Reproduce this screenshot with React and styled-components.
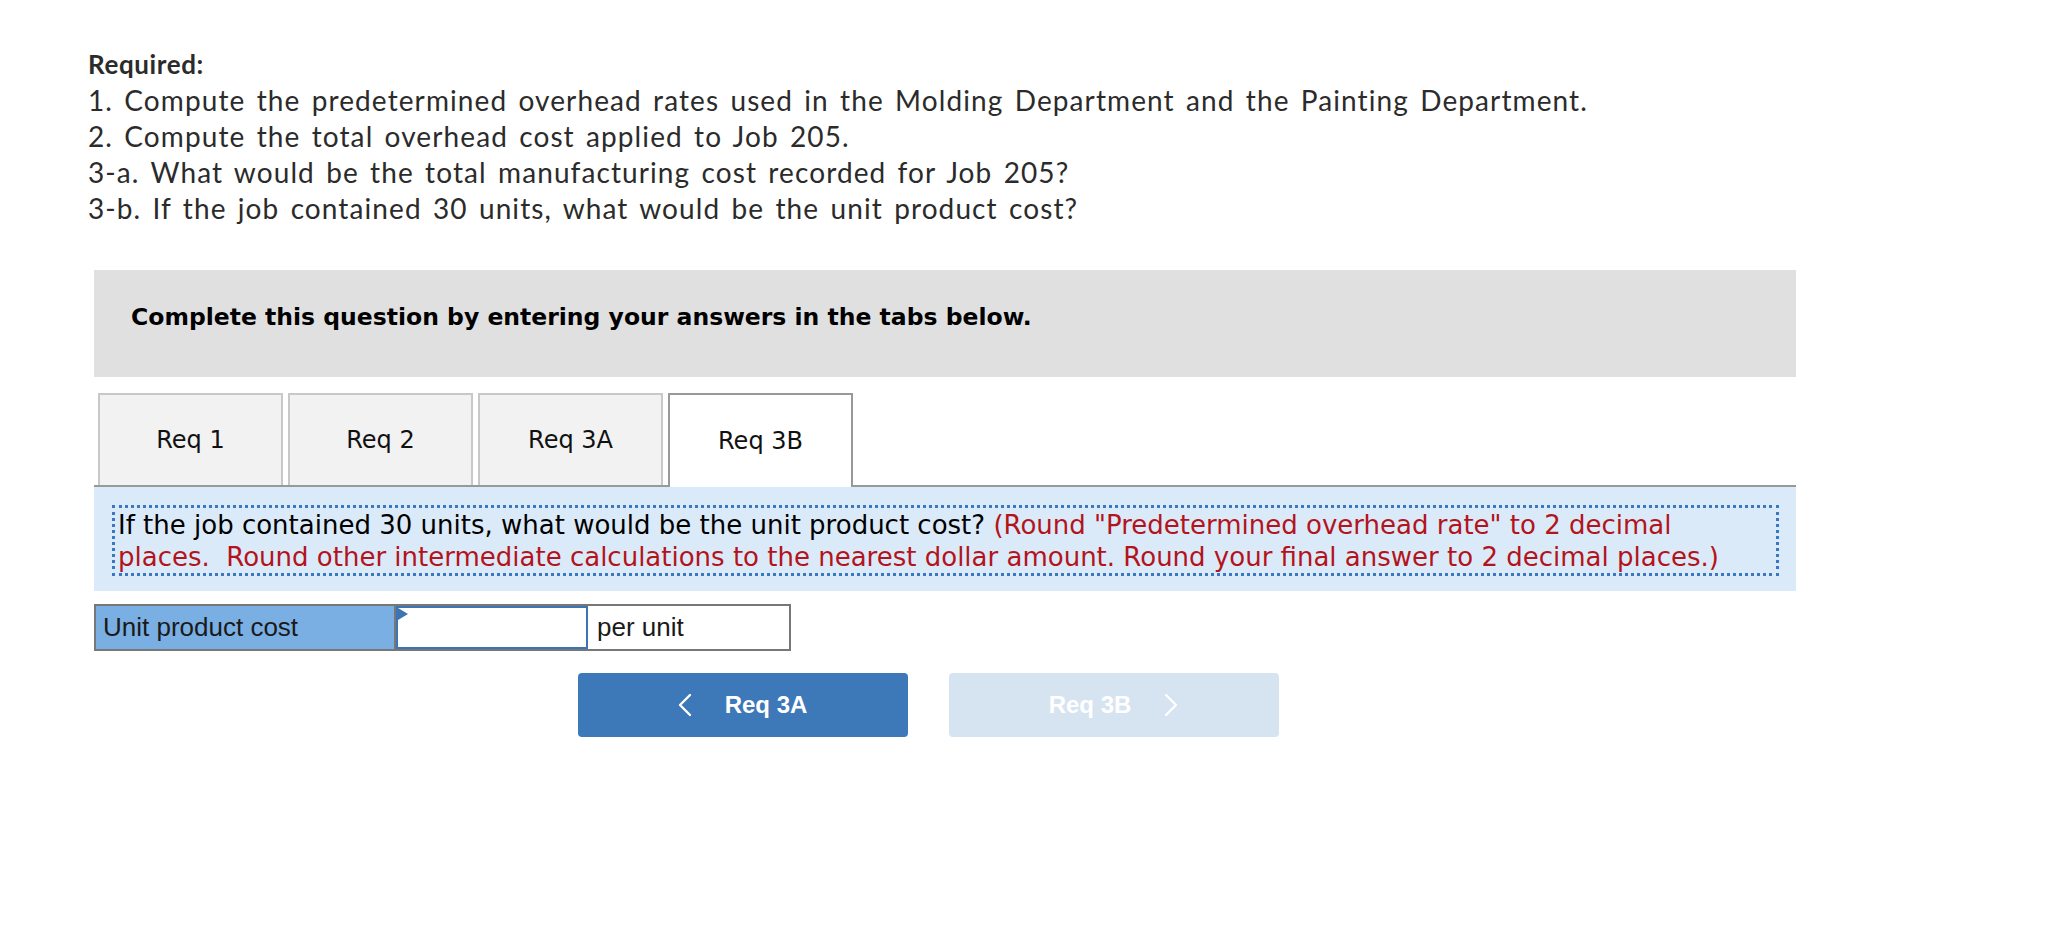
import React from "react";
import styled, { createGlobalStyle } from "styled-components";

const GlobalStyle = createGlobalStyle`
	body {
		margin: 0;
		background: #fff;
	}
	* {
		box-sizing: border-box;
	}
`;

const tabs = ["Req 1", "Req 2", "Req 3A", "Req 3B"];

function Chevron({ dir }) {
	return (
		<svg width="14" height="24" viewBox="0 0 14 24" fill="none">
			<polyline
				points={dir === "left" ? "12,2 2,12 12,22" : "2,2 12,12 2,22"}
				stroke="#fff"
				strokeWidth="2.4"
				strokeLinecap="round"
				strokeLinejoin="round"
			/>
		</svg>
	);
}

function App() {
	return (
		<>
			<GlobalStyle />
			<Page>
				<Required>
					<Heading>Required:</Heading>
					<Item>1. Compute the predetermined overhead rates used in the Molding Department and the Painting Department.</Item>
					<Item>2. Compute the total overhead cost applied to Job 205.</Item>
					<Item>3-a. What would be the total manufacturing cost recorded for Job 205?</Item>
					<Item>3-b. If the job contained 30 units, what would be the unit product cost?</Item>
				</Required>
				<Wrapper>
					<Banner>Complete this question by entering your answers in the tabs below.</Banner>
					<TabBar>
						{tabs.map((t) => (
							<Tab key={t} active={t === "Req 3B"}>
								{t}
							</Tab>
						))}
					</TabBar>
					<Panel>
						<Instruction>
							If the job contained 30 units, what would be the unit product cost?{" "}
							<Hint>
								(Round "Predetermined overhead rate" to 2 decimal places.&nbsp; Round other intermediate
								calculations to the nearest dollar amount. Round your final answer to 2 decimal places.)
							</Hint>
						</Instruction>
					</Panel>
					<AnswerRow>
						<Label>Unit product cost</Label>
						<InputCell>
							<Flag />
							<Field type="text" />
						</InputCell>
						<Unit>per unit</Unit>
					</AnswerRow>
					<Nav>
						<NavButton>
							<Chevron dir="left" />
							<span>Req 3A</span>
						</NavButton>
						<NavButton disabled>
							<span>Req 3B</span>
							<Chevron dir="right" />
						</NavButton>
					</Nav>
				</Wrapper>
			</Page>
		</>
	);
}

const Page = styled.div`
	padding: 46px 0 80px;
`;

const Required = styled.div`
	padding-left: 88px;
	font-family: Lato, "Open Sans", sans-serif;
	font-size: 28px;
	line-height: 36px;
	color: #2b2b2b;
`;

const Heading = styled.div`
	font-weight: 700;
	font-size: 26px;
	letter-spacing: 0.6px;
`;

const Item = styled.div`
	letter-spacing: 1.1px;
	word-spacing: 3px;
`;

const Wrapper = styled.div`
	margin: 44px 0 0 94px;
	width: 1702px;
`;

const Banner = styled.div`
	height: 107px;
	padding: 33px 0 0 37px;
	background: #e0e0e0;
	font-family: "DejaVu Sans", Verdana, sans-serif;
	font-weight: 700;
	font-size: 23.5px;
	line-height: 28px;
	color: #000;
`;

const TabBar = styled.div`
	display: flex;
	gap: 5px;
	margin-top: 16px;
	padding-left: 4px;
	border-bottom: 2px solid #999;
`;

const Tab = styled.div`
	display: flex;
	align-items: center;
	justify-content: center;
	width: 185px;
	height: ${(p) => (p.active ? "94px" : "92px")};
	margin-bottom: ${(p) => (p.active ? "-2px" : "0")};
	background: ${(p) => (p.active ? "#fff" : "#f2f2f2")};
	border: 2px solid ${(p) => (p.active ? "#999" : "#c8c8c8")};
	border-bottom: none;
	font-family: "DejaVu Sans", Verdana, sans-serif;
	font-size: 24px;
	color: #111;
`;

const Panel = styled.div`
	padding: 18px 17px 15px 18px;
	background: #dbeaf8;
`;

const Instruction = styled.div`
	padding: 1px 4px 0 3px;
	border: 3px dotted #3b78c2;
	font-family: "DejaVu Sans", Verdana, sans-serif;
	font-size: 26px;
	line-height: 32px;
	color: #000;
`;

const Hint = styled.span`
	color: #b3141c;
`;

const AnswerRow = styled.div`
	display: flex;
	width: 697px;
	height: 47px;
	margin-top: 13px;
	border: 2px solid #777;
	font-family: "Liberation Sans", Arial, sans-serif;
	font-size: 26px;
	color: #1a1a1a;
`;

const Label = styled.div`
	display: flex;
	align-items: center;
	width: 300px;
	padding-left: 7px;
	background: #7aafe3;
	border-right: 2px solid #777;
`;

const InputCell = styled.div`
	position: relative;
	width: 192px;
	border: 2px solid #3c74b4;
	background: #fff;
`;

const Flag = styled.span`
	position: absolute;
	top: 0;
	left: 0;
	width: 0;
	height: 0;
	border-top: 6px solid transparent;
	border-bottom: 6px solid transparent;
	border-left: 10px solid #3c74b4;
`;

const Field = styled.input`
	width: 100%;
	height: 100%;
	border: none;
	outline: none;
	background: transparent;
	font: inherit;
	padding: 0 8px;
`;

const Unit = styled.div`
	display: flex;
	align-items: center;
	flex: 1;
	padding-left: 9px;
	background: #fff;
`;

const Nav = styled.div`
	display: flex;
	justify-content: center;
	gap: 41px;
	margin-top: 22px;
	padding-right: 34px;
`;

const NavButton = styled.button`
	display: flex;
	align-items: center;
	justify-content: center;
	gap: 33px;
	width: 330px;
	height: 64px;
	padding: 0;
	border: none;
	border-radius: 4px;
	background: ${(p) => (p.disabled ? "#d6e3f1" : "#3d78b8")};
	color: #fff;
	font-family: "Liberation Sans", Arial, sans-serif;
	font-weight: 700;
	font-size: 24px;
	cursor: ${(p) => (p.disabled ? "default" : "pointer")};
`;

export default App;
